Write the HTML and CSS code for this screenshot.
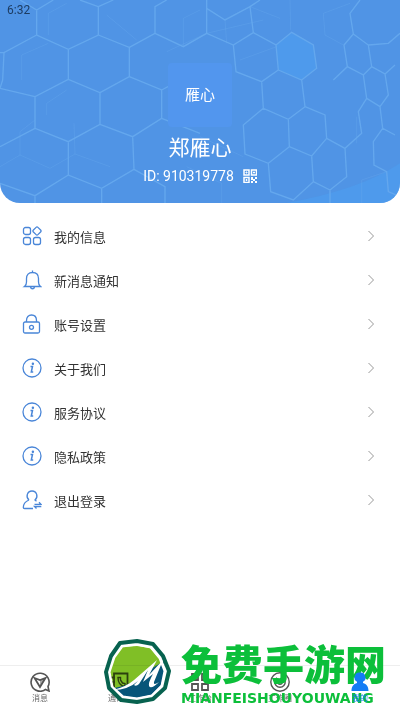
FILE: index.html
```
<!DOCTYPE html>
<html lang="zh-CN">
<head>
    <meta charset="UTF-8">
    <meta name="viewport" content="width=device-width, initial-scale=1.0">
    <title>我的</title>
    <link rel="stylesheet" href="styles.css">
</head>
<body>

    <header class="profile">
        <svg class="profile-bg" viewBox="0 0 1200 609" preserveAspectRatio="xMidYMid slice" aria-hidden="true">
            <path class="cell" d="M828 135L875 97L940 135L950 205L905 240L835 210Z"/>
            <path class="cell" d="M860 609Q1080 570 1200 490V609Z"/>
            <path class="faint" d="M65 240V165L145 130M145 105V40L200 10M140 345V310L200 270M60 465V395L105 360M60 465L0 500M60 465L150 505L225 462L330 500M225 462L222 370M320 45L410 120M550 140V55L600 30M500 155L620 100L790 60M670 60L750 20L840 55M675 60L680 130M720 180L830 140M730 470L600 410M665 609V550L560 500M1085 609V540L1160 515M870 0L872 90M970 40L975 105L1030 135M970 40L1050 10M1070 350V430"/>
            <path d="M60 0L110 30L160 0M110 30V105L205 148L295 105V20L240 0M295 20L340 0M0 158H12L110 105M12 158L8 240L0 265L105 290M205 148V238L105 290V385L205 425L300 373V278L205 238M295 105L388 142V230L300 278M388 142L465 100V20L500 0M388 230L485 270V355L398 410L300 373M398 410L402 508L305 565L205 525V425M105 385L0 440M205 525L105 587L0 550M105 587V609M305 565V609M402 508L495 560V609M485 355L600 400M465 100L550 140L620 100M485 270L560 230M620 0V100L700 135L760 98L750 20L780 0M620 25L675 60L750 20M700 135L708 215L785 245L835 210L828 135L760 98M828 135L875 97L940 135L950 205L905 240L835 210M785 245L790 325L865 358L915 320L905 240M790 325L730 375L735 462L805 490L868 440L865 358M868 440L935 468L980 415L975 345L915 320M980 415L1035 445L1085 400L1075 335L1100 295L1090 225L1042 200L1000 240M1042 200L1032 135L1060 102L1050 40L1080 0M1060 102L1105 135L1115 200L1090 225M1115 200L1155 222L1165 285L1140 320L1100 295M1140 320L1148 385L1185 405M1148 385L1120 425L1122 495L1160 515L1165 575L1200 590M1155 222L1185 195M1105 135L1165 130L1200 100M805 490L812 575L880 600L940 545L935 468M940 545L990 570L1040 530L1035 445M990 570V609"/>
        </svg>
        <div class="status">6:32</div>
        <div class="avatar">雁心</div>
        <h1 class="name">郑雁心</h1>
        <div class="user-id">
            <span>ID: 910319778</span>
            <svg class="qr" viewBox="0 0 14 14" aria-hidden="true">
                <path d="M1 1h5v5H1zM8.500 1h5v5h-5zM1 8.500h5v5H1z" stroke-width="1.500"/>
                <path d="M3 3h1v1H3zM10.500 3h1v1h-1zM3 10.500h1v1H3z"/>
                <path d="M8 8h2v3H8zM12 8h2v2h-2zM10 10h2v2h-2zM8 12h2v2H8zM12 12h2v2h-2z" fill="currentColor" stroke="none"/>
            </svg>
        </div>
    </header>

    <svg width="0" height="0" class="defs" aria-hidden="true">
        <symbol id="info" viewBox="0 0 20 20">
            <circle cx="10" cy="10" r="9"/>
            <path d="M8.500 8.500h2L9.300 14h1.900" stroke-width="1.500"/>
            <circle cx="10.900" cy="5.800" r=".6" fill="currentColor"/>
        </symbol>
        <symbol id="arrow" viewBox="0 0 8 12">
            <path d="M1.500 1L6.500 6L1.500 11"/>
        </symbol>
    </svg>

    <main class="menu">
        <a class="row" href="#">
            <svg class="icon" viewBox="0 0 20 20">
                <rect x="1.500" y="1.500" width="7" height="7" rx="2"/>
                <rect x="1.500" y="11.500" width="7" height="7" rx="2"/>
                <rect x="11.500" y="11.500" width="7" height="7" rx="2"/>
                <rect x="11.800" y="1.800" width="6.400" height="6.400" rx="1.300" transform="rotate(45 15 5)"/>
            </svg>
            <span>我的信息</span>
            <svg class="arrow"><use href="#arrow"/></svg>
        </a>
        <a class="row" href="#">
            <svg class="icon" viewBox="0 0 20 20">
                <path d="M2.500 16.500C4 15.500 4.500 14 4.500 12V8.500C4.500 5.200 6.500 2.500 10.500 2.500S16.500 5.200 16.500 8.500V12C16.500 14 17 15.500 18.500 16.500ZM10.500 2.500V.5M8.500 17C9 19.300 12 19.300 12.500 17"/>
            </svg>
            <span>新消息通知</span>
            <svg class="arrow"><use href="#arrow"/></svg>
        </a>
        <a class="row" href="#">
            <svg class="icon" viewBox="0 0 20 20">
                <rect x="1.500" y="8" width="16" height="11" rx="1.500"/>
                <path d="M4.500 8V6.500C4.500 3 6.500 1 9.500 1S14.500 3 14.500 6.500V8"/>
                <circle cx="9.500" cy="13.300" r="2"/>
            </svg>
            <span>账号设置</span>
            <svg class="arrow"><use href="#arrow"/></svg>
        </a>
        <a class="row" href="#">
            <svg class="icon"><use href="#info"/></svg>
            <span>关于我们</span>
            <svg class="arrow"><use href="#arrow"/></svg>
        </a>
        <a class="row" href="#">
            <svg class="icon"><use href="#info"/></svg>
            <span>服务协议</span>
            <svg class="arrow"><use href="#arrow"/></svg>
        </a>
        <a class="row" href="#">
            <svg class="icon"><use href="#info"/></svg>
            <span>隐私政策</span>
            <svg class="arrow"><use href="#arrow"/></svg>
        </a>
        <a class="row" href="#">
            <svg class="icon" viewBox="0 0 20 20">
                <path d="M7 10C3.500 7 5 1 10 1S16.500 7 13 10L14.500 11.300M7 10C3.500 11.500 1.300 14 1.300 17.500Q1.300 18.500 2.500 18.500H11"/>
                <path d="M12.500 14.300H19L17 12.300M19.300 16.500H12.500L14.500 18.500"/>
            </svg>
            <span>退出登录</span>
            <svg class="arrow"><use href="#arrow"/></svg>
        </a>
    </main>

    <nav class="tabs">
        <a class="tab" href="#">
            <svg class="tab-icon" viewBox="0 0 20 20">
                <path d="M16 17A9 9 0 1 1 18 14.500L19 19L15.500 17.500" stroke-width="1.600"/>
                <path d="M4.500 6L10 8L15.500 6L10 15Z" stroke-width="1.800"/>
                <path d="M10 8L15.500 6L10 15Z" fill="currentColor" fill-opacity=".5" stroke="none"/>
            </svg>
            <span>消息</span>
        </a>
        <a class="tab" href="#">
            <svg class="tab-icon" viewBox="0 0 20 20">
                <path d="M4 1.500H17.500V18.500H4ZM1 5.500H5M1 10H5M1 14.500H5" stroke-width="1.800"/>
                <path d="M8 5.500C8 11 10 14 15 14.500V11.500L12.500 11L10.500 8V5.500Z"/>
            </svg>
            <span>通讯录</span>
        </a>
        <a class="tab" href="#">
            <svg class="tab-icon" viewBox="0 0 20 20">
                <path d="M2 2H8V8H2ZM12 2H18V8H12ZM2 12H8V18H2ZM12 12H18V18H12Z" stroke-width="1.800"/>
            </svg>
            <span>工作台</span>
        </a>
        <a class="tab" href="#">
            <svg class="tab-icon" viewBox="0 0 20 20">
                <circle cx="10" cy="10" r="9.200"/>
                <path d="M7 5.800A5.200 5.200 0 1 0 13 5.800"/>
                <circle cx="10" cy="10" r="2.200"/>
            </svg>
            <span>工作圈</span>
        </a>
        <a class="tab active" href="#">
            <svg class="tab-icon" viewBox="0 0 20 20">
                <path d="M10 .5A5 5 0 0 1 13 9.800V11C16.500 12 18.500 14.500 18.500 19H1.500C1.500 14.500 3.500 12 7 11V9.800A5 5 0 0 1 10 .5Z" fill="currentColor" stroke="none"/>
            </svg>
            <span>我的</span>
        </a>
    </nav>

    <div class="watermark">
        <svg class="badge" viewBox="0 0 68 66" aria-hidden="true">
            <path class="badge-top" d="M18 8L33 7L46 9L55 19L60 30L39 41L12 50L8 46L6 33L10 19Z"/>
            <path d="M60 22L61 32L57 46L47 56L33 59L19 57L10 49Q28 47 40 34Z" fill="#075579"/>
            <path d="M18 7L33 5L47 8L56 19L61 32L58 47L48 57L33 60L19 58L8 48L5 33L10 18Z" stroke="#fff" stroke-width="3"/>
            <path d="M16 4L33 2L49 5L59 17L65 32L61 49L49 60L33 63L17 61L5 49L2 33L7 17Z" stroke="#07624f" stroke-width="4"/>
            <path d="M9 51Q22 48 30 41L53 21L45 36L59 21L50 43Q49 47 55 43Q47 51 45 47Q44 44 49 35L39 43L44 31L35 45Q32 48 30 46L34 42Q24 51 9 51Z" fill="#fff"/>
        </svg>
        <div class="brand">
            <div class="brand-name">免费手游网</div>
            <div class="brand-latin">MIANFEISHOUYOUWANG</div>
        </div>
    </div>

</body>
</html>
```
FILE: styles.css
```
* {
    box-sizing: border-box;
}
body {
    margin: 0;
    min-height: 100vh;
    display: flex;
    flex-direction: column;
    position: relative;
    background: #fff;
    color: #333;
    font-family: Roboto, "Noto Sans CJK SC", sans-serif;
}
a {
    color: inherit;
    text-decoration: none;
}
svg {
    display: block;
    flex: none;
    fill: none;
    stroke: currentColor;
}
.defs {
    position: absolute;
}

/* profile header */
.profile {
    position: relative;
    overflow: hidden;
    display: flex;
    flex-direction: column;
    align-items: center;
    padding-bottom: 17px;
    border-radius: 0 0 20px 20px;
    background: #5094e5;
    color: #fff;
}
.profile > * {
    position: relative;
}
.profile > .profile-bg {
    position: absolute;
    inset: 0;
    width: 100%;
    height: 100%;
    stroke: #72b5f3;
    stroke-width: 4;
    opacity: 0.6;
}
.profile-bg .cell {
    fill: #4d9ff0;
    stroke: none;
}
.profile-bg .faint {
    stroke-width: 3;
    opacity: 0.4;
}
.status {
    align-self: flex-start;
    padding-left: 7px;
    font-size: 12px;
    line-height: 20px;
    color: #1d3c62;
}
.avatar {
    width: 64px;
    height: 64px;
    margin-top: 43px;
    border-radius: 4px;
    background: #5296ee;
    font-size: 15px;
    line-height: 64px;
    text-align: center;
}
.name {
    margin: 7px 0 4px;
    font-size: 21px;
    font-weight: 400;
    line-height: 28px;
}
.user-id {
    display: flex;
    align-items: center;
    gap: 9px;
    font-size: 14px;
    line-height: 20px;
}
.qr {
    width: 14px;
    height: 14px;
}

/* settings list */
.menu {
    flex: 1;
    padding-top: 11px;
}
.row {
    display: flex;
    align-items: center;
    gap: 12px;
    height: 44px;
    padding: 0 25px 0 22px;
    font-size: 13px;
}
.row span {
    flex: 1;
}
.icon {
    width: 20px;
    height: 20px;
    color: #4a86d8;
    stroke-width: 1.3;
}
.arrow {
    width: 8px;
    height: 12px;
    color: #999;
}

/* bottom tabs */
.tabs {
    display: flex;
    height: 46px;
    border-top: 1px solid #eee;
}
.tab {
    flex: 1;
    display: flex;
    flex-direction: column;
    align-items: center;
    padding-top: 6px;
    font-size: 8px;
    line-height: 14px;
    color: #666;
}
.tab-icon {
    width: 20px;
    height: 20px;
    stroke-width: 1.4;
    color: #555;
}
.tab.active {
    position: relative;
    z-index: 1;
}
.tab.active,
.active .tab-icon {
    color: #147cf5;
}

/* site mark laid over the tab bar */
.watermark {
    position: absolute;
    right: 14px;
    bottom: 6px;
    display: flex;
    align-items: center;
    gap: 9px;
    color: #0cbf3a;
    pointer-events: none;
}
.badge {
    width: 68px;
    height: 66px;
    stroke: none;
    stroke-linejoin: round;
}
.badge-top {
    fill: #80bf26;
    mix-blend-mode: multiply;
}
.brand-name {
    font-family: "Noto Sans CJK SC", sans-serif;
    font-size: 41px;
    font-weight: 900;
    line-height: 46px;
}
.brand-latin {
    padding-top: 6px;
    font-family: "DejaVu Sans", sans-serif;
    font-size: 14px;
    font-weight: 700;
    line-height: 14px;
}
```
